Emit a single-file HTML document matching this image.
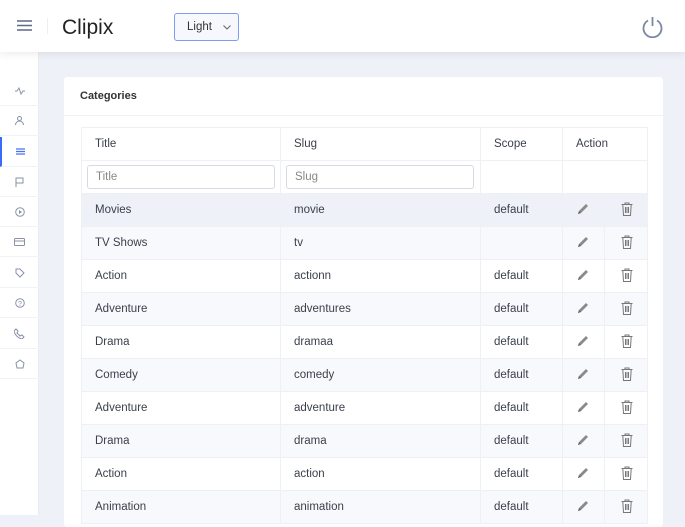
<!DOCTYPE html>
<html><head><style>
*{margin:0;padding:0;box-sizing:border-box}
body{width:685px;height:515px;overflow:hidden;background:#eef1f7;font-family:"Liberation Sans",sans-serif;color:#333;position:relative}
.hdr{position:absolute;left:0;top:0;width:685px;height:52px;background:#fff;box-shadow:0 2px 8px rgba(0,0,0,.08);z-index:2}
.side{position:absolute;left:0;top:52px;width:39px;height:463px;background:#fff;border-right:1px solid #e8ebf2}
.si{position:absolute;left:0;width:39px;height:30px;border-bottom:1px solid #f0f2f6;display:flex;align-items:center;justify-content:center}
.card{position:absolute;left:64px;top:77px;width:599px;height:450px;background:#fff;border-radius:3px}
table{position:absolute;left:17px;top:50px;border-collapse:collapse;font-size:11.5px;color:#3a3f4a}
td{height:33px;border:1px solid #eef0f4;padding-left:13px;vertical-align:middle}
input{width:188px;height:24px;border:1px solid #d6dae2;border-radius:3px;font-size:11.5px;padding-left:8px;color:#888;font-family:inherit}
tr.s td{background:#f8f9fc}
tr.h td{background:#eef1f8}
</style></head><body>
<div class="hdr">
<svg style="position:absolute;left:17px;top:20px" width="15" height="11"><path d="M0 1h15M0 5.5h15M0 10h15" stroke="#5b6a85" stroke-width="1.5"/></svg>
<div style="position:absolute;left:47px;top:18px;width:1px;height:16px;background:#eee"></div>
<div style="position:absolute;left:62px;top:16px;font-size:21px;color:#222">Clipix</div>
<div style="position:absolute;left:174px;top:13px;width:65px;height:28px;border:1px solid #7f9df0;border-radius:3px;background:#f6f8fd;font-size:11.5px;color:#333;padding:7px 0 0 12px">Light<svg style="position:absolute;left:48px;top:11px" width="8" height="5"><path d="M0.5 0.5l3.5 3.5 3.5-3.5" fill="none" stroke="#666"/></svg></div>
<svg style="position:absolute;left:641px;top:15px" width="23" height="23" viewBox="0 0 23 23"><path d="M7 5.5A9 9 0 1 0 16 5.5" fill="none" stroke="#7a88a3" stroke-width="1.8"/><path d="M11.5 2v9" stroke="#7a88a3" stroke-width="1.8"/></svg>
</div>
<div class="side">
<div class="si" style="top:24px"><svg width="10" height="8"><path d="M0 4h2l2-3 2 6 2-3h2" fill="none" stroke="#8892a6"/></svg></div>
<div class="si" style="top:54px"><svg width="9" height="9"><circle cx="4.5" cy="2.5" r="2" fill="none" stroke="#8892a6"/><path d="M0.5 9a4 4 0 0 1 8 0" fill="none" stroke="#8892a6"/></svg></div>
<div class="si" style="top:85px;border-left:2px solid #3b6cf5"><svg width="9" height="7"><path d="M0 1h9M0 3.5h9M0 6h9" stroke="#4a72f0" stroke-width="1.2"/></svg></div>
<div class="si" style="top:115px"><svg width="9" height="10"><path d="M1 10V1h7v5H1" fill="none" stroke="#8892a6"/></svg></div>
<div class="si" style="top:145px"><svg width="10" height="10"><circle cx="5" cy="5" r="4.3" fill="none" stroke="#8892a6"/><path d="M4 3v4l3-2z" fill="#8892a6"/></svg></div>
<div class="si" style="top:175px"><svg width="11" height="8"><rect x=".5" y=".5" width="10" height="7" rx="1" fill="none" stroke="#8892a6"/><path d="M1 3h9" stroke="#8892a6"/></svg></div>
<div class="si" style="top:206px"><svg width="10" height="10"><path d="M1 1h4l4 4-4 4-4-4z" fill="none" stroke="#8892a6"/></svg></div>
<div class="si" style="top:236px"><svg width="10" height="10"><circle cx="5" cy="5" r="4.3" fill="none" stroke="#8892a6"/><text x="3" y="8" font-size="7" fill="#8892a6">?</text></svg></div>
<div class="si" style="top:267px"><svg width="11" height="11"><path d="M2 1l2 2-1 2 3 3 2-1 2 2-2 2C4 10 1 7 0 3z" fill="none" stroke="#8892a6"/></svg></div>
<div class="si" style="top:297px"><svg width="10" height="10"><path d="M5 1l4 3-1 5H2L1 4z" fill="none" stroke="#8892a6"/></svg></div>
</div>
<div class="card">
<div style="position:absolute;left:16px;top:13px;font-size:11px;font-weight:bold;color:#333">Categories</div>
<div style="position:absolute;left:0;top:38px;width:599px;height:1px;background:#eef0f4"></div>
<table>
<tr><td style="width:199px">Title</td><td style="width:200px">Slug</td><td style="width:82px">Scope</td><td colspan="2" style="width:85px">Action</td></tr>
<tr><td style="padding-left:5px"><input value="Title"></td><td style="padding-left:5px"><input value="Slug"></td><td></td><td colspan="2"></td></tr>
</table>
</div>
<script>
var d=[["Movies","movie","default"],["TV Shows","tv",""],["Action","actionn","default"],["Adventure","adventures","default"],["Drama","dramaa","default"],["Comedy","comedy","default"],["Adventure","adventure","default"],["Drama","drama","default"],["Action","action","default"],["Animation","animation","default"]];
var pen='<svg width="14" height="14" viewBox="0 0 14 14"><path d="M2 12l1-3 7-7 2 2-7 7z" fill="#8a8a8a" /><path d="M2 12l1-3 2 2z" fill="#666"/></svg>';
var bin='<svg width="12" height="14" viewBox="0 0 12 14"><path d="M0.5 2.5h11M4 2.5V1h4v1.5M1.8 2.5l.7 11h7l.7-11M4.5 5v6M6 5v6M7.5 5v6" fill="none" stroke="#777" stroke-width="1"/></svg>';
var h='';d.forEach(function(r,i){h+='<tr class="'+(i==0?'h':(i%2?'s':''))+'"><td>'+r[0]+'</td><td>'+r[1]+'</td><td>'+r[2]+'</td><td style="width:42px">'+pen+'</td><td style="width:43px;padding-left:16px">'+bin+'</td></tr>'});
document.querySelector('table tbody').insertAdjacentHTML('beforeend',h);
</script>
</body></html>
